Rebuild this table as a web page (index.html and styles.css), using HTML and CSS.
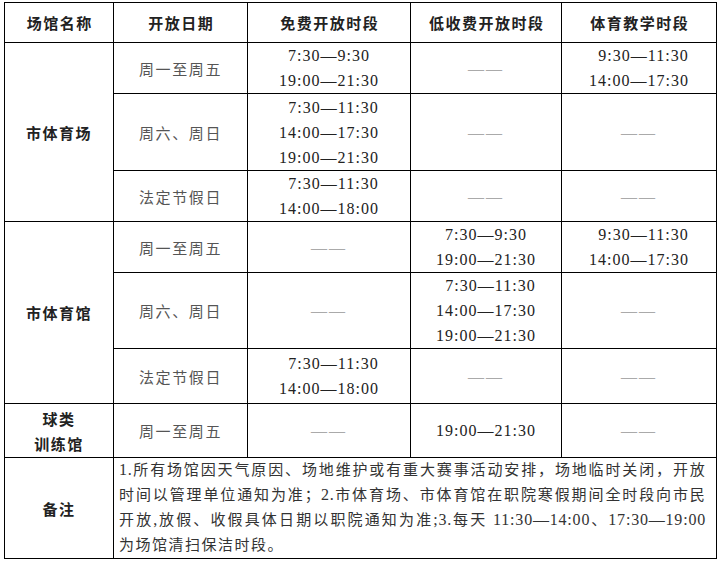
FILE: index.html
```html
<!DOCTYPE html>
<html lang="zh-CN">
<head>
<meta charset="utf-8">
<title>场馆开放时段</title>
<link rel="stylesheet" href="styles.css">
</head>
<body>
<table class="sched">
  <colgroup>
    <col class="c1"><col class="c2"><col class="c3"><col class="c4"><col class="c5">
  </colgroup>
  <tr class="r-head">
    <th>场馆名称</th><th>开放日期</th><th>免费开放时段</th><th>低收费开放时段</th><th>体育教学时段</th>
  </tr>
  <tr class="r2l">
    <td class="venue" rowspan="3">市体育场</td>
    <td class="day">周一至周五</td>
    <td class="time"><div>7:30—9:30</div><div>19:00—21:30</div></td>
    <td class="none">——</td>
    <td class="time"><div class="ind">9:30—11:30</div><div>14:00—17:30</div></td>
  </tr>
  <tr class="r3l">
    <td class="day">周六、周日</td>
    <td class="time"><div class="ind">7:30—11:30</div><div>14:00—17:30</div><div>19:00—21:30</div></td>
    <td class="none">——</td>
    <td class="none">——</td>
  </tr>
  <tr class="r2l">
    <td class="day">法定节假日</td>
    <td class="time"><div class="ind">7:30—11:30</div><div>14:00—18:00</div></td>
    <td class="none">——</td>
    <td class="none">——</td>
  </tr>
  <tr class="r2l">
    <td class="venue" rowspan="3">市体育馆</td>
    <td class="day">周一至周五</td>
    <td class="none">——</td>
    <td class="time"><div>7:30—9:30</div><div>19:00—21:30</div></td>
    <td class="time"><div class="ind">9:30—11:30</div><div>14:00—17:30</div></td>
  </tr>
  <tr class="r3s">
    <td class="day">周六、周日</td>
    <td class="none">——</td>
    <td class="time"><div class="ind">7:30—11:30</div><div>14:00—17:30</div><div>19:00—21:30</div></td>
    <td class="none">——</td>
  </tr>
  <tr class="r2t">
    <td class="day">法定节假日</td>
    <td class="time"><div class="ind">7:30—11:30</div><div>14:00—18:00</div></td>
    <td class="none">——</td>
    <td class="none">——</td>
  </tr>
  <tr class="r2b">
    <td class="venue"><div>球类</div><div>训练馆</div></td>
    <td class="day">周一至周五</td>
    <td class="none">——</td>
    <td class="time"><div>19:00—21:30</div></td>
    <td class="none">——</td>
  </tr>
  <tr class="r-note">
    <td class="venue">备注</td>
    <td class="note" colspan="4">
      <span class="jl"><span class="num">1.</span>所有场馆因天气原因、场地维护或有重大赛事活动安排，场地临时关闭，开放</span>
      <span class="jl">时间以管理单位通知为准；<span class="num">2.</span>市体育场、市体育馆在职院寒假期间全时段向市民</span>
      <span class="jl">开放<span class="num">,</span>放假、收假具体日期以职院通知为准<span class="num">;3.</span>每天<span class="num"> 11:30—14:00</span>、<span class="num">17:30—19:00</span></span>
      <span class="ll">为场馆清扫保洁时段。</span>
    </td>
  </tr>
</table>
</body>
</html>
```
FILE: styles.css
```css
html, body {
  background: #fff;
}
body {
  margin: 0;
  padding: 2px 0 0 4px;
}
.sched {
  border-collapse: collapse;
  table-layout: fixed;
  width: 713px;
  font-family: "Liberation Serif", "Noto Sans CJK SC", serif;
}
.c1 { width: 109px; }
.c2 { width: 134px; }
.c3 { width: 163px; }
.c4 { width: 151px; }
.c5 { width: 155px; }

.sched th,
.sched td {
  border: 1px solid #000;
  padding: 0;
  text-align: center;
  vertical-align: middle;
}

.r-head { height: 40px; }
.r2l { height: 51px; }
.r3l { height: 77px; }
.r3s { height: 75px; }
.r2t { height: 55px; }
.r2b { height: 54px; }
.r-note { height: 101px; }

.sched th {
  font-family: "Noto Sans CJK SC", sans-serif;
  font-size: 15px;
  font-weight: 700;
  letter-spacing: 1.5px;
  padding-left: 1.5px;
  color: #222;
  line-height: 20px;
}

.venue {
  font-family: "Noto Sans CJK SC", sans-serif;
  font-size: 15px;
  font-weight: 700;
  letter-spacing: 1.5px;
  padding-left: 1.5px;
  color: #222;
  line-height: 25px;
}

.day {
  font-family: "Noto Sans CJK SC", sans-serif;
  font-size: 15px;
  letter-spacing: 1.6px;
  color: #555;
  line-height: 25px;
}

.time {
  font-family: "Liberation Serif", serif;
  font-size: 16px;
  letter-spacing: 1px;
  color: #222;
  line-height: 25px;
}
.time .ind {
  padding-left: 9px;
}

.none {
  font-family: "Liberation Serif", serif;
  font-size: 16px;
  letter-spacing: 2px;
  padding-left: 2px;
  color: #aaa;
  line-height: 25px;
}

.sched td.note {
  text-align: left;
  padding: 0 10px 0 5px;
  font-family: "Liberation Serif", "Noto Sans CJK SC", serif;
  font-size: 15px;
  color: #333;
  line-height: 25px;
  letter-spacing: 1.5px;
}
.note .jl {
  display: block;
  height: 25px;
  text-align: justify;
  text-align-last: justify;
  white-space: nowrap;
  letter-spacing: 1.2px;
}
.note .ll {
  display: block;
  height: 25px;
  text-align: left;
}
.note .num {
  font-size: 16px;
  line-height: 1;
  letter-spacing: 0.8px;
}
```
